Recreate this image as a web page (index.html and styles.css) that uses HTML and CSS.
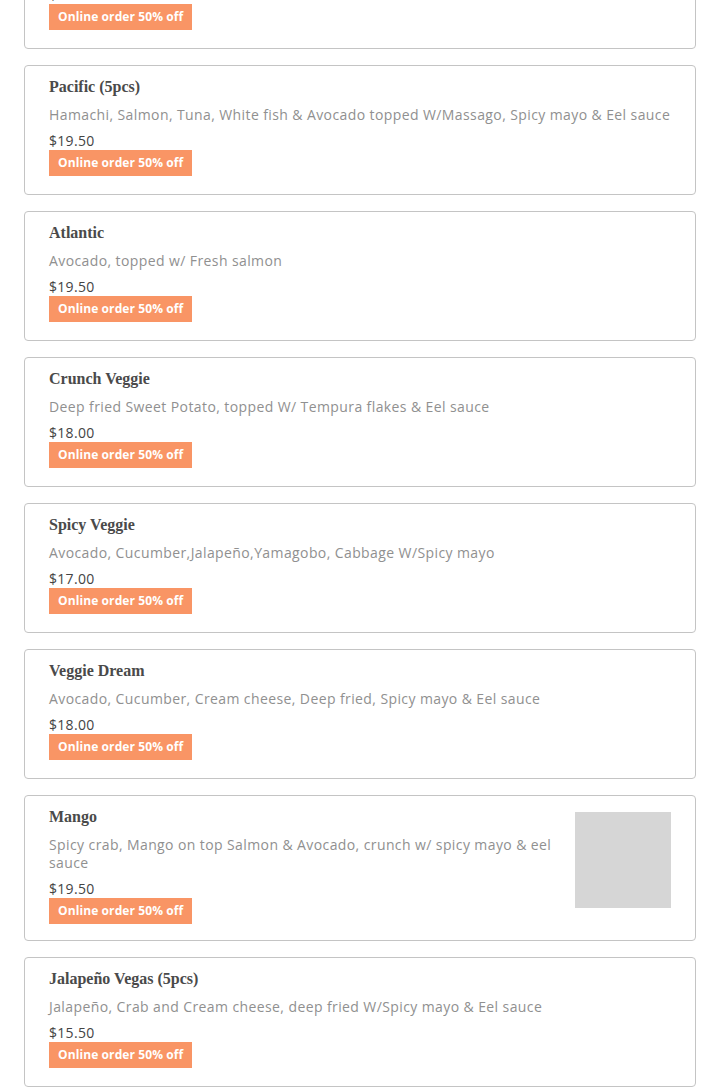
FILE: index.html
```html
<!DOCTYPE html>
<html>
<head>
<meta charset="utf-8">
<link rel="stylesheet" href="styles.css">
</head>
<body>
<div class="menu">
  <div class="card">
    <div class="info">
      <div class="title">Rainbow</div>
      <div class="desc">Crab, Cucumber, Avocado topped W/ Assorted fish</div>
      <div class="price">$19.50</div>
      <span class="badge">Online order 50% off</span>
    </div>
  </div>
  <div class="card">
    <div class="info">
      <div class="title">Pacific (5pcs)</div>
      <div class="desc">Hamachi, Salmon, Tuna, White fish &amp; Avocado topped W/Massago, Spicy mayo &amp; Eel sauce</div>
      <div class="price">$19.50</div>
      <span class="badge">Online order 50% off</span>
    </div>
  </div>
  <div class="card">
    <div class="info">
      <div class="title">Atlantic</div>
      <div class="desc">Avocado, topped w/ Fresh salmon</div>
      <div class="price">$19.50</div>
      <span class="badge">Online order 50% off</span>
    </div>
  </div>
  <div class="card">
    <div class="info">
      <div class="title">Crunch Veggie</div>
      <div class="desc">Deep fried Sweet Potato, topped W/ Tempura flakes &amp; Eel sauce</div>
      <div class="price">$18.00</div>
      <span class="badge">Online order 50% off</span>
    </div>
  </div>
  <div class="card">
    <div class="info">
      <div class="title">Spicy Veggie</div>
      <div class="desc">Avocado, Cucumber,Jalapeño,Yamagobo, Cabbage W/Spicy mayo</div>
      <div class="price">$17.00</div>
      <span class="badge">Online order 50% off</span>
    </div>
  </div>
  <div class="card">
    <div class="info">
      <div class="title">Veggie Dream</div>
      <div class="desc">Avocado, Cucumber, Cream cheese, Deep fried, Spicy mayo &amp; Eel sauce</div>
      <div class="price">$18.00</div>
      <span class="badge">Online order 50% off</span>
    </div>
  </div>
  <div class="card has-img">
    <div class="info">
      <div class="title">Mango</div>
      <div class="desc">Spicy crab, Mango on top Salmon &amp; Avocado, crunch w/ spicy mayo &amp; eel sauce</div>
      <div class="price">$19.50</div>
      <span class="badge">Online order 50% off</span>
    </div>
    <div class="thumb"></div>
  </div>
  <div class="card">
    <div class="info">
      <div class="title">Jalapeño Vegas (5pcs)</div>
      <div class="desc">Jalapeño, Crab and Cream cheese, deep fried W/Spicy mayo &amp; Eel sauce</div>
      <div class="price">$15.50</div>
      <span class="badge">Online order 50% off</span>
    </div>
  </div>
</div>
</body>
</html>
```

FILE: styles.css
```css
html, body {
  margin: 0;
  padding: 0;
  background: #ffffff;
}
body {
  overflow: hidden;
}
.menu {
  display: flex;
  flex-direction: column;
  gap: 16px;
  padding: 0 24px;
  margin-top: -81px;
}
.card {
  display: flex;
  gap: 16px;
  border: 1px solid #c4c4c4;
  border-radius: 4px;
  padding: 11px 24px 18px 24px;
  box-sizing: border-box;
  height: 130px;
}
.card.has-img {
  height: auto;
  padding-top: 11px;
  padding-bottom: 16px;
}
.info {
  flex: 1;
  min-width: 0;
  display: flex;
  flex-direction: column;
  align-items: flex-start;
}
.title {
  font-family: "Liberation Serif", "DejaVu Serif", serif;
  font-weight: bold;
  font-size: 16px;
  line-height: 20px;
  color: #4a4a4a;
}
.desc {
  font-family: "Open Sans", "DejaVu Sans", sans-serif;
  font-size: 14px;
  line-height: 18px;
  color: #909090;
  margin-top: 9px;
  letter-spacing: 0.4px;
}
.price {
  font-family: "Open Sans", "DejaVu Sans", sans-serif;
  font-size: 14px;
  line-height: 18px;
  color: #444444;
  margin-top: 8px;
  letter-spacing: 0.3px;
}
.badge {
  display: inline-block;
  background: #f99565;
  color: #ffffff;
  font-family: "Open Sans", "DejaVu Sans", sans-serif;
  font-weight: bold;
  font-size: 12px;
  line-height: 26px;
  height: 26px;
  padding: 0 9px;
  letter-spacing: 0.1px;
}
.thumb {
  width: 96px;
  height: 96px;
  flex: none;
  margin-top: 5px;
  background: #d6d6d6;
}
```
